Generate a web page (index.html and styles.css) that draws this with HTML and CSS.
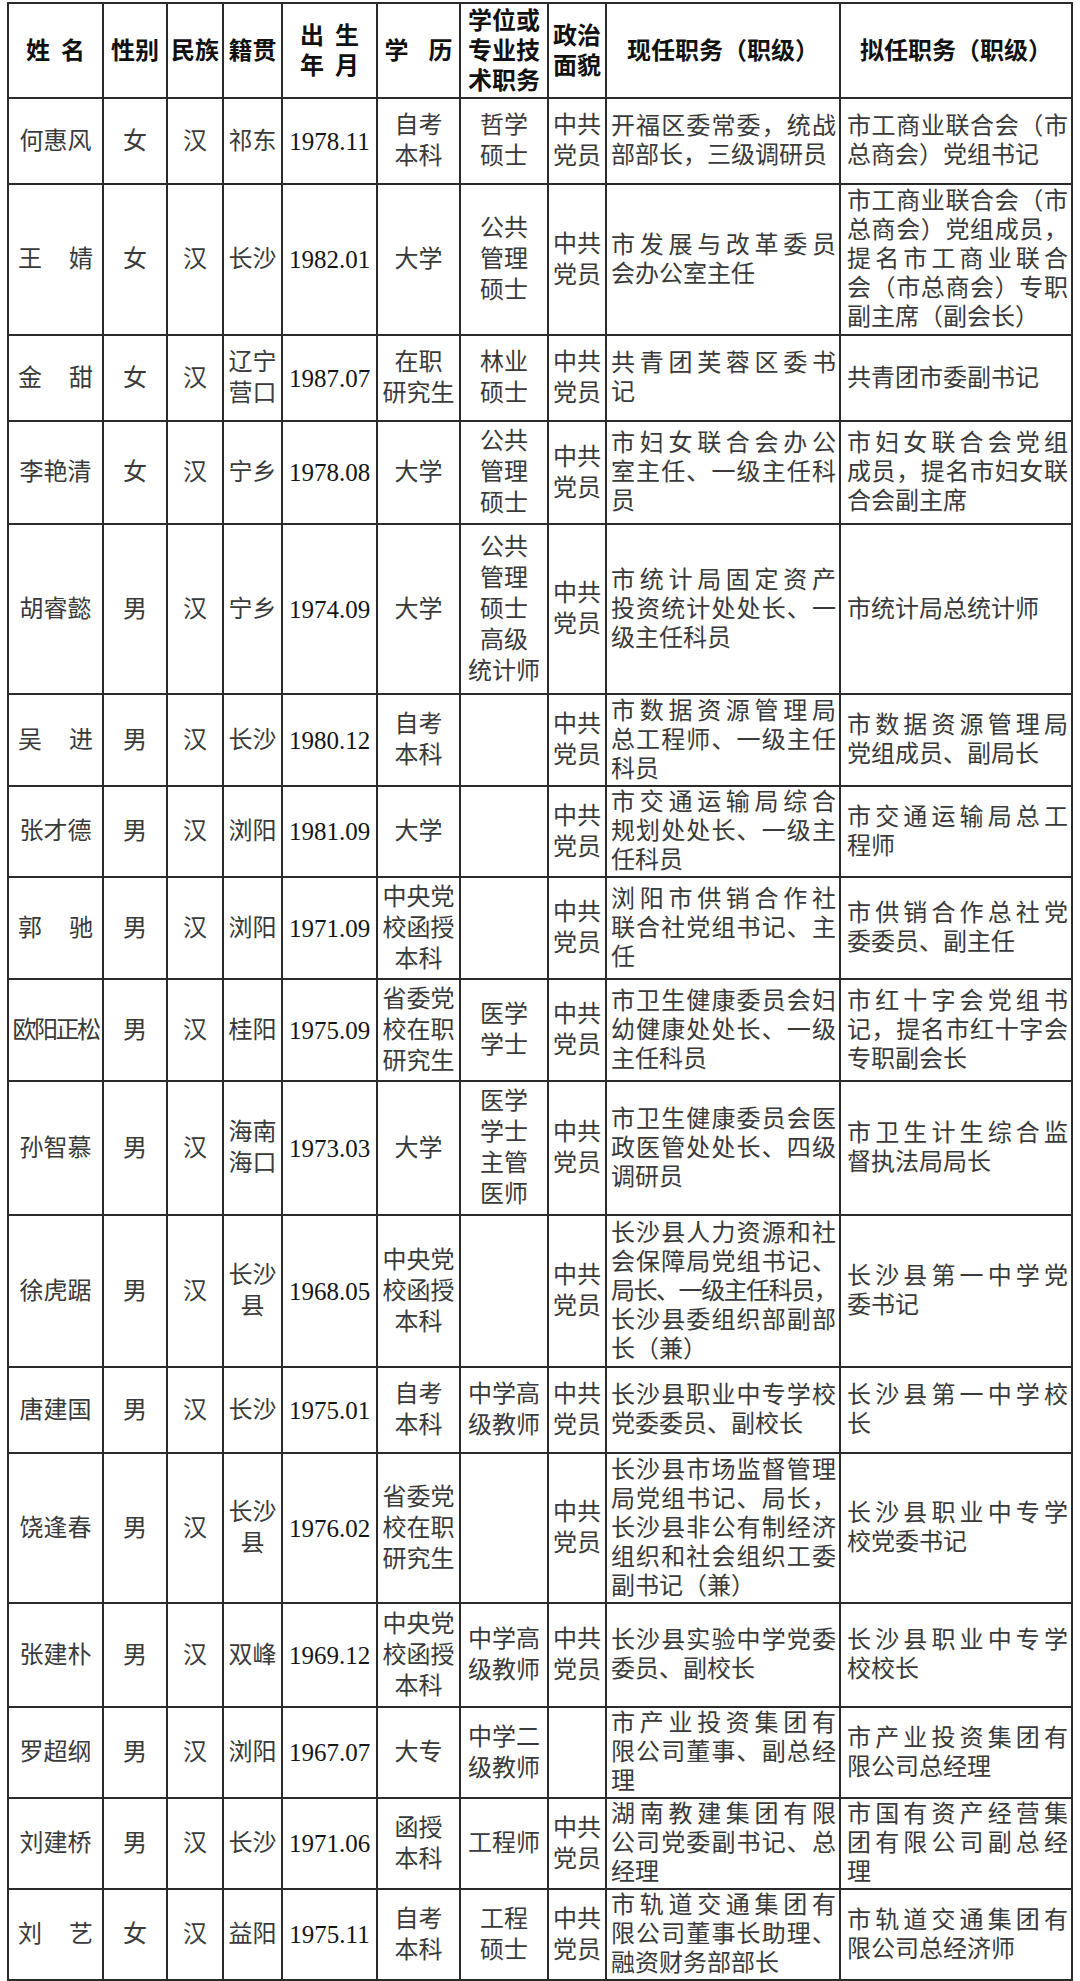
FILE: index.html
```html
<!DOCTYPE html>
<html lang="zh-CN">
<head>
<meta charset="utf-8">
<title>拟任职干部名单</title>
<link rel="stylesheet" href="styles.css">
</head>
<body>
<table class="roster">
<colgroup>
<col class="c-name"><col class="c-sex"><col class="c-eth"><col class="c-origin"><col class="c-birth">
<col class="c-edu"><col class="c-degree"><col class="c-party"><col class="c-cur"><col class="c-new">
</colgroup>
<thead>
<tr>
<th class="sp">姓 名</th><th>性别</th><th>民族</th><th>籍贯</th><th class="sp">出 生<br>年 月</th>
<th class="sp wide">学 历</th><th>学位或<br>专业技<br>术职务</th><th>政治<br>面貌</th><th>现任职务（职级）</th><th>拟任职务（职级）</th>
</tr>
</thead>
<tbody>
<tr>
<td class="name">何惠风</td><td>女</td><td>汉</td><td>祁东</td><td class="num">1978.11</td><td>自考<br>本科</td><td>哲学<br>硕士</td><td>中共<br>党员</td>
<td class="txt"><span>开福区委常委，统战</span><span>部部长，三级调研员</span></td>
<td class="txt new"><span>市工商业联合会（市</span><span>总商会）党组书记</span></td>
</tr>
<tr>
<td class="name n2">王婧</td><td>女</td><td>汉</td><td>长沙</td><td class="num">1982.01</td><td>大学</td><td>公共<br>管理<br>硕士</td><td>中共<br>党员</td>
<td class="txt"><span>市发展与改革委员</span><span>会办公室主任</span></td>
<td class="txt new"><span>市工商业联合会（市</span><span>总商会）党组成员，</span><span>提名市工商业联合</span><span>会（市总商会）专职</span><span>副主席（副会长）</span></td>
</tr>
<tr>
<td class="name n2">金甜</td><td>女</td><td>汉</td><td>辽宁<br>营口</td><td class="num">1987.07</td><td>在职<br>研究生</td><td>林业<br>硕士</td><td>中共<br>党员</td>
<td class="txt"><span>共青团芙蓉区委书</span><span>记</span></td>
<td class="txt new"><span>共青团市委副书记</span></td>
</tr>
<tr>
<td class="name">李艳清</td><td>女</td><td>汉</td><td>宁乡</td><td class="num">1978.08</td><td>大学</td><td>公共<br>管理<br>硕士</td><td>中共<br>党员</td>
<td class="txt"><span>市妇女联合会办公</span><span>室主任、一级主任科</span><span>员</span></td>
<td class="txt new"><span>市妇女联合会党组</span><span>成员，提名市妇女联</span><span>合会副主席</span></td>
</tr>
<tr>
<td class="name">胡睿懿</td><td>男</td><td>汉</td><td>宁乡</td><td class="num">1974.09</td><td>大学</td><td>公共<br>管理<br>硕士<br>高级<br>统计师</td><td>中共<br>党员</td>
<td class="txt"><span>市统计局固定资产</span><span>投资统计处处长、一</span><span>级主任科员</span></td>
<td class="txt new"><span>市统计局总统计师</span></td>
</tr>
<tr>
<td class="name n2">吴进</td><td>男</td><td>汉</td><td>长沙</td><td class="num">1980.12</td><td>自考<br>本科</td><td></td><td>中共<br>党员</td>
<td class="txt"><span>市数据资源管理局</span><span>总工程师、一级主任</span><span>科员</span></td>
<td class="txt new"><span>市数据资源管理局</span><span>党组成员、副局长</span></td>
</tr>
<tr>
<td class="name">张才德</td><td>男</td><td>汉</td><td>浏阳</td><td class="num">1981.09</td><td>大学</td><td></td><td>中共<br>党员</td>
<td class="txt"><span>市交通运输局综合</span><span>规划处处长、一级主</span><span>任科员</span></td>
<td class="txt new"><span>市交通运输局总工</span><span>程师</span></td>
</tr>
<tr>
<td class="name n2">郭驰</td><td>男</td><td>汉</td><td>浏阳</td><td class="num">1971.09</td><td>中央党<br>校函授<br>本科</td><td></td><td>中共<br>党员</td>
<td class="txt"><span>浏阳市供销合作社</span><span>联合社党组书记、主</span><span>任</span></td>
<td class="txt new"><span>市供销合作总社党</span><span>委委员、副主任</span></td>
</tr>
<tr>
<td class="name tight">欧阳正松</td><td>男</td><td>汉</td><td>桂阳</td><td class="num">1975.09</td><td>省委党<br>校在职<br>研究生</td><td>医学<br>学士</td><td>中共<br>党员</td>
<td class="txt"><span>市卫生健康委员会妇</span><span>幼健康处处长、一级</span><span>主任科员</span></td>
<td class="txt new"><span>市红十字会党组书</span><span>记，提名市红十字会</span><span>专职副会长</span></td>
</tr>
<tr>
<td class="name">孙智慕</td><td>男</td><td>汉</td><td>海南<br>海口</td><td class="num">1973.03</td><td>大学</td><td>医学<br>学士<br>主管<br>医师</td><td>中共<br>党员</td>
<td class="txt"><span>市卫生健康委员会医</span><span>政医管处处长、四级</span><span>调研员</span></td>
<td class="txt new"><span>市卫生计生综合监</span><span>督执法局局长</span></td>
</tr>
<tr>
<td class="name">徐虎踞</td><td>男</td><td>汉</td><td>长沙<br>县</td><td class="num">1968.05</td><td>中央党<br>校函授<br>本科</td><td></td><td>中共<br>党员</td>
<td class="txt"><span>长沙县人力资源和社</span><span>会保障局党组书记、</span><span class="cmp">局长、一级主任科员，</span><span>长沙县委组织部副部</span><span>长（兼）</span></td>
<td class="txt new"><span>长沙县第一中学党</span><span>委书记</span></td>
</tr>
<tr>
<td class="name">唐建国</td><td>男</td><td>汉</td><td>长沙</td><td class="num">1975.01</td><td>自考<br>本科</td><td>中学高<br>级教师</td><td>中共<br>党员</td>
<td class="txt"><span>长沙县职业中专学校</span><span>党委委员、副校长</span></td>
<td class="txt new"><span>长沙县第一中学校</span><span>长</span></td>
</tr>
<tr>
<td class="name">饶逢春</td><td>男</td><td>汉</td><td>长沙<br>县</td><td class="num">1976.02</td><td>省委党<br>校在职<br>研究生</td><td></td><td>中共<br>党员</td>
<td class="txt"><span>长沙县市场监督管理</span><span>局党组书记、局长，</span><span>长沙县非公有制经济</span><span>组织和社会组织工委</span><span>副书记（兼）</span></td>
<td class="txt new"><span>长沙县职业中专学</span><span>校党委书记</span></td>
</tr>
<tr>
<td class="name">张建朴</td><td>男</td><td>汉</td><td>双峰</td><td class="num">1969.12</td><td>中央党<br>校函授<br>本科</td><td>中学高<br>级教师</td><td>中共<br>党员</td>
<td class="txt"><span>长沙县实验中学党委</span><span>委员、副校长</span></td>
<td class="txt new"><span>长沙县职业中专学</span><span>校校长</span></td>
</tr>
<tr>
<td class="name">罗超纲</td><td>男</td><td>汉</td><td>浏阳</td><td class="num">1967.07</td><td>大专</td><td>中学二<br>级教师</td><td></td>
<td class="txt"><span>市产业投资集团有</span><span>限公司董事、副总经</span><span>理</span></td>
<td class="txt new"><span>市产业投资集团有</span><span>限公司总经理</span></td>
</tr>
<tr>
<td class="name">刘建桥</td><td>男</td><td>汉</td><td>长沙</td><td class="num">1971.06</td><td>函授<br>本科</td><td>工程师</td><td>中共<br>党员</td>
<td class="txt"><span>湖南教建集团有限</span><span>公司党委副书记、总</span><span>经理</span></td>
<td class="txt new"><span>市国有资产经营集</span><span>团有限公司副总经</span><span>理</span></td>
</tr>
<tr>
<td class="name n2">刘艺</td><td>女</td><td>汉</td><td>益阳</td><td class="num">1975.11</td><td>自考<br>本科</td><td>工程<br>硕士</td><td>中共<br>党员</td>
<td class="txt"><span>市轨道交通集团有</span><span>限公司董事长助理、</span><span>融资财务部部长</span></td>
<td class="txt new"><span>市轨道交通集团有</span><span>限公司总经济师</span></td>
</tr>
</tbody>
</table>
</body>
</html>
```

FILE: styles.css
```css
html, body {
  margin: 0;
  padding: 0;
  background: #ffffff;
}

body {
  font-family: "Liberation Serif", "Noto Sans CJK SC", serif;
  color: #3a3a3a;
}

.roster {
  border-collapse: collapse;
  table-layout: fixed;
  width: 1064px;
  margin: 2px 0 0 7px;
  font-size: 24px;
}

.c-name { width: 95px; }
.c-sex { width: 64px; }
.c-eth { width: 56px; }
.c-origin { width: 59px; }
.c-birth { width: 95px; }
.c-edu { width: 83px; }
.c-degree { width: 88px; }
.c-party { width: 58px; }
.c-cur { width: 234px; }
.c-new { width: 232px; }

.roster th,
.roster td {
  border: 2px solid #2b2b2b;
  padding: 0 1px;
  text-align: center;
  vertical-align: middle;
  line-height: 31px;
  font-weight: 400;
  overflow: visible;
}

.roster th {
  font-weight: 700;
  color: #111111;
  line-height: 30px;
}

.roster th.sp {
  word-spacing: 5px;
}

.roster th.wide {
  word-spacing: 14px;
}

.roster thead tr { height: 95px; }
.roster tbody tr:nth-child(1) { height: 86px; }
.roster tbody tr:nth-child(2) { height: 151px; }
.roster tbody tr:nth-child(3) { height: 86px; }
.roster tbody tr:nth-child(4) { height: 103px; }
.roster tbody tr:nth-child(5) { height: 170px; }
.roster tbody tr:nth-child(6) { height: 92px; }
.roster tbody tr:nth-child(7) { height: 91px; }
.roster tbody tr:nth-child(8) { height: 102px; }
.roster tbody tr:nth-child(9) { height: 102px; }
.roster tbody tr:nth-child(10) { height: 134px; }
.roster tbody tr:nth-child(11) { height: 152px; }
.roster tbody tr:nth-child(12) { height: 86px; }
.roster tbody tr:nth-child(13) { height: 150px; }
.roster tbody tr:nth-child(14) { height: 104px; }
.roster tbody tr:nth-child(15) { height: 91px; }
.roster tbody tr:nth-child(16) { height: 91px; }
.roster tbody tr:nth-child(17) { height: 91px; }

.roster td.name {
  padding: 0 9px;
}

.roster td.n2 {
  text-align: justify;
  text-align-last: justify;
}

.roster td.tight {
  padding: 0;
  letter-spacing: -2.5px;
  white-space: nowrap;
}

.roster td.num {
  font-size: 25px;
  color: #151515;
}

.roster td.txt {
  text-align: left;
  line-height: 29px;
  padding: 0 3px 0 4px;
}

.roster td.new {
  padding: 0 3px 0 6px;
}

.txt span {
  display: block;
}

.txt span:not(:last-child) {
  text-align: justify;
  text-align-last: justify;
}

.txt span.cmp {
  letter-spacing: -1.8px;
}
```
